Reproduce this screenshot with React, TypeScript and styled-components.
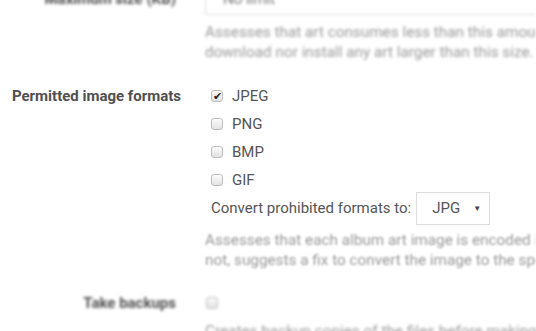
import styled, { createGlobalStyle } from 'styled-components';

const GlobalStyle = createGlobalStyle`
  html, body {
    margin: 0;
    padding: 0;
    background: #fff;
    overflow: hidden;
  }
  body {
    font-family: Roboto, 'Liberation Sans', sans-serif;
    font-size: 15px;
    color: #555;
  }
`;

const formats = [
  { name: 'JPEG', checked: true },
  { name: 'PNG', checked: false },
  { name: 'BMP', checked: false },
  { name: 'GIF', checked: false },
];

export default function App() {
  return (
    <>
      <GlobalStyle />
      <$Page>
        <$Group $blur={1.8}>
          <$Label $height={32} $inset={5}>Maximum size (KB)</$Label>
          <$Input>No limit</$Input>
        </$Group>
        <$Help $blur={1.4} $top={7}>
          Assesses that art consumes less than this amount of disk space. If not, it will neither
          <br />
          download nor install any art larger than this size.
        </$Help>

        <$Group $top={20}>
          <$Label $height={28}>Permitted image formats</$Label>
          <$Options>
            {formats.map((f) => (
              <$Option key={f.name}>
                <$Check $checked={f.checked}>{f.checked ? '✔' : ''}</$Check>
                {f.name}
              </$Option>
            ))}
            <$ConvertRow>
              Convert prohibited formats to:
              <$Select>
                JPG
                <$Caret>▼</$Caret>
              </$Select>
            </$ConvertRow>
          </$Options>
        </$Group>
        <$Help $blur={0.9} $top={6}>
          Assesses that each album art image is encoded in the permitted formats. If
          <br />
          not, suggests a fix to convert the image to the specified format.
        </$Help>

        <$Group $top={19} $blur={1.6}>
          <$Label $height={28} $inset={5}>Take backups</$Label>
          <$BackupCell>
            <$Check $checked={false} />
          </$BackupCell>
        </$Group>
        <$Help $blur={1.8} $top={4}>
          Creates backup copies of the files before making any changes to them.
        </$Help>
      </$Page>
    </>
  );
}

const $Page = styled.div`
  width: 536px;
  margin-top: -17px;
`;

const $Group = styled.div<{ $blur?: number; $top?: number }>`
  display: grid;
  grid-template-columns: 181px 1fr;
  column-gap: 24px;
  align-items: start;
  margin-top: ${(p) => p.$top ?? 0}px;
  filter: ${(p) => (p.$blur ? `blur(${p.$blur}px)` : 'none')};
`;

const $Label = styled.div<{ $height: number; $inset?: number }>`
  text-align: right;
  padding-right: ${(p) => p.$inset ?? 0}px;
  font-size: 15px;
  font-weight: 700;
  color: #505050;
  line-height: ${(p) => p.$height}px;
  white-space: nowrap;
`;

const $Input = styled.div`
  height: 32px;
  box-sizing: border-box;
  border: 1px solid #ddd;
  border-right: none;
  padding-left: 17px;
  line-height: 30px;
  color: #777;
`;

const $Help = styled.div<{ $blur?: number; $top: number }>`
  margin-left: 205px;
  margin-top: ${(p) => p.$top}px;
  font-size: 15.3px;
  color: #999;
  line-height: 20px;
  white-space: nowrap;
  overflow: hidden;
  filter: ${(p) => (p.$blur ? `blur(${p.$blur}px)` : 'none')};
`;

const $Options = styled.div`
  display: flex;
  flex-direction: column;
  padding-left: 6px;
`;

const $Option = styled.div`
  display: flex;
  align-items: center;
  gap: 9px;
  height: 28px;
  color: #555;
`;

const $Check = styled.span<{ $checked: boolean }>`
  display: inline-flex;
  align-items: center;
  justify-content: center;
  width: 12px;
  height: 12px;
  box-sizing: border-box;
  border: 1px solid #bdbdbd;
  border-radius: 3px;
  background: linear-gradient(#fbfbfb, #e2e2e2);
  color: #222;
  font-size: 11px;
  line-height: 1;
  overflow: visible;
`;

const $ConvertRow = styled.div`
  display: flex;
  align-items: center;
  gap: 5px;
  height: 32px;
  margin-top: -2px;
  color: #555;
`;

const $Select = styled.div`
  display: flex;
  align-items: center;
  justify-content: space-between;
  width: 74px;
  height: 33px;
  box-sizing: border-box;
  border: 1px solid #ddd;
  padding: 0 8px 0 15px;
  color: #555;
`;

const $Caret = styled.span`
  font-size: 8px;
  color: #444;
`;

const $BackupCell = styled.div`
  display: flex;
  align-items: center;
  height: 28px;
  padding-left: 1px;
`;
